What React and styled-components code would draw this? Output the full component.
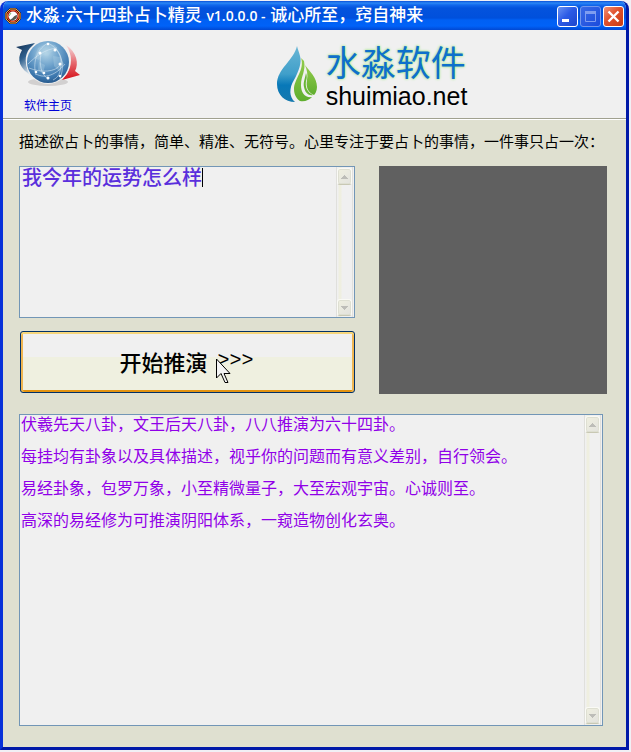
import React, { useState } from 'react'
import styled, { createGlobalStyle } from 'styled-components'

const INTRO = [
    '伏羲先天八卦，文王后天八卦，八八推演为六十四卦。',
    '每挂均有卦象以及具体描述，视乎你的问题而有意义差别，自行领会。',
    '易经卦象，包罗万象，小至精微量子，大至宏观宇宙。心诚则至。',
    '高深的易经修为可推演阴阳体系，一窥造物创化玄奥。',
].join('\n\n')

function BaguaIcon() {
    return (
        <svg width="16" height="16" viewBox="0 0 16 16" aria-hidden="true">
            <path d="M5 0h6l5 5v6l-5 5H5l-5-5V5z" fill="#3a1208" />
            <path d="M5 1h6l4 4v6l-4 4H5l-4-4V5z" fill="none" stroke="#f0b050" strokeWidth="1" />
            <path d="M5.500 2.500h5l3 3v5l-3 3h-5l-3-3v-5z" fill="#9c1c14" stroke="#e8572c" strokeWidth="1" />
            <circle cx="8" cy="8" r="4.500" fill="#fff" />
            <path d="M12 7a4.500 4.500 0 0 1-7 4.500c2-.5 2.500-1.500 3.500-2.500s2-2 3.500-2z" fill="#555a50" />
            <path d="M4 8l2-3" stroke="#78b868" strokeWidth="1" />
        </svg>
    )
}

function GlobeIcon() {
    return (
        <svg width="66" height="48" viewBox="0 0 66 48" aria-hidden="true">
            <defs>
                <radialGradient id="globe" cx="45%" cy="28%" r="75%">
                    <stop offset="0" stopColor="#b5d6e8" />
                    <stop offset="0.45" stopColor="#6a9fca" />
                    <stop offset="0.8" stopColor="#3b76ad" />
                    <stop offset="1" stopColor="#245486" />
                </radialGradient>
                <linearGradient id="blueArrow" x1="0" y1="0" x2="0.5" y2="1">
                    <stop offset="0" stopColor="#102a4c" />
                    <stop offset="0.5" stopColor="#2e5f8d" />
                    <stop offset="1" stopColor="#d5e2ec" />
                </linearGradient>
                <linearGradient id="redArrow" x1="0" y1="0" x2="0" y2="1">
                    <stop offset="0" stopColor="#f5dfe0" />
                    <stop offset="0.5" stopColor="#e66a70" />
                    <stop offset="1" stopColor="#d40f18" />
                </linearGradient>
            </defs>
            <ellipse cx="33" cy="43" rx="20" ry="4" fill="#d2d0d0" />
            <path d="M1 8 L20 4 L15 9 C9 16 9 27 17 37 C5 30 1 21 7 11 Z" fill="url(#blueArrow)" />
            <path d="M51 6 C62 13 64 25 60 32 L65 36 L47 41 L52 35 C57 27 58 16 51 6 Z" fill="url(#redArrow)" />
            <circle cx="33" cy="23" r="22" fill="#f0f0f0" />
            <circle cx="33" cy="23" r="21" fill="url(#globe)" />
            <path d="M23 9l8-4 9 1 3 5-7 2-3 4-5-1-4 5-5-2zM38 17l7 1 4 7-5 7-5-5zM24 23l6 3-2 9-5-4z" fill="#b4d4e5" fillOpacity="0.35" />
            <g fill="none" stroke="#d9eaf4" strokeOpacity="0.7" strokeWidth="0.800">
                <path d="M33 4C20 11 18 26 21 36M33 4c10 5 14 14 13 22s-2 12-8 15M13 25C20 18 30 10 42 9M14 29c12 5 27 4 31-3M26 14c-2 12 0 21 7 26M41 10c7 7 8 20 4 30M21 35c9 5 20 1 29-10" />
            </g>
            <g fill="#fff">
                <circle cx="33" cy="5" r="1.300" /><circle cx="25" cy="14" r="1.500" />
                <circle cx="40" cy="11" r="1.500" /><circle cx="45" cy="25" r="1.500" />
                <circle cx="21" cy="33" r="1.300" /><circle cx="29" cy="34" r="1.300" />
                <circle cx="33" cy="39" r="1.500" /><circle cx="45" cy="37" r="1.300" />
            </g>
        </svg>
    )
}

function DropLogo() {
    return (
        <svg width="42" height="58" viewBox="0 0 42 58" aria-hidden="true">
            <defs>
                <linearGradient id="dropBlue" x1="0" y1="0" x2="0" y2="1">
                    <stop offset="0" stopColor="#69b6d5" />
                    <stop offset="0.5" stopColor="#409fca" />
                    <stop offset="0.7" stopColor="#0878b8" />
                    <stop offset="1" stopColor="#1679ae" />
                </linearGradient>
                <linearGradient id="dropGreen" x1="0" y1="0" x2="0" y2="1">
                    <stop offset="0" stopColor="#93cc4c" />
                    <stop offset="1" stopColor="#5fae2e" />
                </linearGradient>
            </defs>
            <path d="M21 0C18 14 1 23 1 38c0 11 8 18 18 18-6-5-6-14-1-22 5-9 8-18 6-24C23 6 22 4 21 0z" fill="url(#dropBlue)" />
            <path d="M25 12c4 12-7 21-7 31 0 6 3 10 6 12 5 1 9-1 12-4-7 1-11-4-11-12 0-9 5-14 3-24-1-1-2-2-3-3z" fill="url(#dropGreen)" />
            <path d="M29 19c4 6 12 12 12 22 0 4-2 7-3 8-7-3-8-9-7-15 1-5 0-10-2-15z" fill="url(#dropGreen)" />
            <path d="M30 27c-1 6-3 9-2 14 1 6 5 9 9 8-6-3-8-8-7-14 1-3 1-5 0-8z" fill="#6ab636" />
        </svg>
    )
}

function ScrollTrack({ name }) {
    return (
        <Track>
            <ScrollButton type="button" disabled aria-label={`${name}向上滚动`}>
                <svg width="7" height="4" viewBox="0 0 7 4"><path d="M3 0h1v1h1v1h1v1h1v1H0V3h1V2h1V1h1z" fill="#bdbdb8" /></svg>
            </ScrollButton>
            <ScrollButton type="button" disabled aria-label={`${name}向下滚动`}>
                <svg width="7" height="4" viewBox="0 0 7 4"><path d="M0 0h7v1H6v1H5v1H4v1H3V3H2V2H1V1H0z" fill="#bdbdb8" /></svg>
            </ScrollButton>
        </Track>
    )
}

function App() {
    const [question, setQuestion] = useState('我今年的运势怎么样')

    return (
        <>
            <GlobalStyle />
            <Window>
                <TitleBar>
                    <BaguaIcon />
                    <Title>
                        水淼·六十四卦占卜精灵 <Version>v1.0.0.0 -</Version> 诚心所至，窍自神来
                    </Title>
                    <CaptionButton type="button" aria-label="最小化">
                        <svg width="21" height="21" viewBox="0 0 21 21"><path d="M5 13h7v3H5z" fill="#fff" /></svg>
                    </CaptionButton>
                    <CaptionButton type="button" aria-label="最大化" disabled>
                        <svg width="21" height="21" viewBox="0 0 21 21"><path d="M5.500 5.500h10v10h-10z" fill="none" stroke="#7f9df0" /><path d="M5 5h11v3H5z" fill="#7f9df0" /></svg>
                    </CaptionButton>
                    <CaptionButton type="button" aria-label="关闭" $close>
                        <svg width="21" height="21" viewBox="0 0 21 21"><path d="M5.500 5.500l10 10M15.500 5.500l-10 10" stroke="#fff" strokeWidth="2.400" /></svg>
                    </CaptionButton>
                </TitleBar>
                <Header>
                    <HomeLink href="#home">
                        <GlobeIcon />
                        软件主页
                    </HomeLink>
                    <Brand>
                        <DropLogo />
                        <div>
                            <BrandName>水淼软件</BrandName>
                            <BrandSite>shuimiao.net</BrandSite>
                        </div>
                    </Brand>
                </Header>
                <Main>
                    <Label htmlFor="question">
                        描述欲占卜的事情，简单、精准、无符号。心里专注于要占卜的事情，一件事只占一次：
                    </Label>
                    <AskRow>
                        <AskColumn>
                            <Field>
                                <QuestionText
                                    id="question"
                                    value={question}
                                    onChange={e => setQuestion(e.target.value)}
                                    spellCheck={false}
                                />
                                <Caret />
                                <ScrollTrack name="问题" />
                            </Field>
                            <StartButton type="button">
                                开始推演 <Arrows>&gt;&gt;&gt;</Arrows>
                                <Pointer width="16" height="28" viewBox="0 0 16 28" aria-hidden="true">
                                    <path d="M.5 1v19l4.500-4.500 4 9h3l-4-9h6z" fill="#f4f4f4" stroke="#000" />
                                </Pointer>
                            </StartButton>
                        </AskColumn>
                        <HexagramPanel />
                    </AskRow>
                    <ResultField>
                        <ResultText aria-label="推演结果" readOnly value={INTRO} spellCheck={false} />
                        <ScrollTrack name="结果" />
                    </ResultField>
                </Main>
            </Window>
        </>
    )
}

const GlobalStyle = createGlobalStyle`
    * {
        box-sizing: border-box;
    }
    body {
        margin: 0;
        padding: 1px 2px 2px 0;
        background: #f1f0f5;
        font-family: 'Liberation Sans', 'Noto Sans CJK SC', sans-serif;
    }
`

const Window = styled.div`
    border: 3px solid #0831d9;
    border-color: #0855dd #0019a8 #0019a8 #0831d9;
    border-top: none;
    border-radius: 8px 8px 0 0;
    background: #dfe0d0;
    overflow: hidden;
`

const TitleBar = styled.header`
    height: 29px;
    display: flex;
    align-items: center;
    gap: 2px;
    padding: 1px 2px 0;
    color: #fff;
    background: linear-gradient(#0a4fd8 0, #2b88f5 2px, #1268ec 4px, #0453dd 7px, #0050dc 17px, #0060f4 19px, #0062f8 25px, #0148d2 29px);
`

const Title = styled.h1`
    flex: 1;
    min-width: 0;
    margin: 0 0 0 3px;
    overflow: hidden;
    white-space: nowrap;
    font-family: 'Liberation Sans', 'Noto Sans CJK SC', sans-serif;
    font-size: 17px;
    line-height: 24px;
    font-weight: 500;
`

const Version = styled.span`
    font-family: 'Open Sans', sans-serif;
    font-size: 14px;
    font-weight: 600;
`

const CaptionButton = styled.button`
    width: 21px;
    height: 21px;
    flex: none;
    display: flex;
    align-items: center;
    justify-content: center;
    padding: 0;
    border: 1px solid ${p => (p.disabled ? '#7397ec' : '#fff')};
    border-radius: 3px;
    background: ${p =>
        p.$close
            ? 'linear-gradient(135deg, #ee9177, #e0512c 45%, #c83c14)'
            : p.disabled
                ? 'linear-gradient(135deg, #3a6ae6, #1a4bdc)'
                : 'linear-gradient(135deg, #6a93f3, #2c5be6 45%, #1c46cc)'};

    svg {
        flex: none;
    }
`

const Header = styled.div`
    position: relative;
    height: 90px;
    display: flex;
    justify-content: center;
    background: #f0f0f0;
    border-bottom: 1px solid #fff;
    box-shadow: inset 0 -1px #a0a18f;
`

const HomeLink = styled.a`
    position: absolute;
    left: 12px;
    top: 9px;
    display: flex;
    flex-direction: column;
    align-items: center;
    gap: 11px;
    color: #0000d8;
    font-size: 12px;
    line-height: 16px;
    text-decoration: none;
`

const Brand = styled.div`
    display: flex;
    gap: 8px;
    padding: 16px 0 0 114px;
`

const BrandName = styled.div`
    color: #0e70cc;
    font-size: 35px;
    line-height: 36px;
    text-shadow: 0 0 3px #a5e888, 0 0 2px #b8eaa0;
`

const BrandSite = styled.div`
    color: #000;
    font-size: 25px;
    line-height: 28px;
`

const Main = styled.main`
    padding: 11px 19px 21px 16px;
`

const Label = styled.label`
    display: block;
    margin-bottom: 15px;
    color: #000;
    font-family: 'Noto Sans CJK SC', sans-serif;
    font-size: 15px;
    line-height: 20px;
    white-space: nowrap;
`

const AskRow = styled.div`
    display: grid;
    grid-template-columns: 1fr 228px;
    gap: 24px;
`

const AskColumn = styled.div`
    display: flex;
    flex-direction: column;
    gap: 13px;
    min-width: 0;
`

const Field = styled.div`
    position: relative;
    height: 152px;
    display: flex;
    border: 1px solid #7296b6;
    background: #f0f0f0;
`

const ResultField = styled(Field)`
    height: 312px;
    margin: 20px 4px 0 0;
`

const TextBox = styled.textarea`
    flex: 1;
    min-width: 0;
    height: 100%;
    border: none;
    outline: none;
    resize: none;
    overflow: hidden;
    background: transparent;
    font-family: 'Noto Sans CJK SC', sans-serif;
`

const QuestionText = styled(TextBox)`
    padding: 0 2px;
    color: #5a2fdc;
    font-size: 20px;
    line-height: 20px;
    font-weight: 500;
`

const ResultText = styled(TextBox)`
    padding: 0 1px;
    color: #9000e8;
    font-size: 16px;
    line-height: 16px;
`

const Caret = styled.i`
    position: absolute;
    left: 182px;
    top: 1px;
    width: 1px;
    height: 19px;
    background: #000;
`

const Track = styled.div`
    width: 17px;
    flex: none;
    display: flex;
    flex-direction: column;
    justify-content: space-between;
    padding: 1px 0;
    margin-right: 1px;
    border: solid #e0e0dc;
    border-width: 0 1px;
    background: linear-gradient(90deg, #f0f0f0 1px, #efefe0 2px, #efefe0 4px, #f0f0f0 5px);
`

const ScrollButton = styled.button`
    width: 15px;
    height: 17px;
    display: flex;
    align-items: center;
    justify-content: center;
    padding: 0;
    border: 1px solid #fafaf5;
    border-bottom-color: #c8c8b4;
    border-radius: 3px;
    background: linear-gradient(135deg, #f0f0e0, #e2e2de);
    box-shadow: inset 0 0 0 1px #dedfd2;
`

const StartButton = styled.button`
    position: relative;
    height: 62px;
    display: flex;
    align-items: center;
    justify-content: center;
    margin-left: 1px;
    padding: 0 2px 2px 0;
    border: 1px solid #003068;
    border-radius: 3px;
    color: #000;
    background: linear-gradient(#f0f0f0 25px, #eff0e0 25px);
    box-shadow: inset 0 2px #f6d67b, inset 2px 0 #efb652, inset -2px 0 #efb652, inset 0 -2px #e39310;
    font-family: 'Noto Sans CJK SC', sans-serif;
    font-size: 22px;
    line-height: 28px;
    font-weight: 500;
`

const Arrows = styled.span`
    margin-left: 10px;
    font-family: 'Liberation Mono', monospace;
    font-size: 20px;
    font-weight: 400;
`

const Pointer = styled.svg`
    position: absolute;
    left: 195px;
    top: 26px;
`

const HexagramPanel = styled.div`
    height: 228px;
    background: #606060;
`

export default App
